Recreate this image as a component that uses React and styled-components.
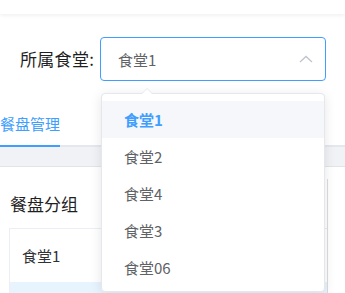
import React from "react";
import styled, { createGlobalStyle } from "styled-components";

const Global = createGlobalStyle`
  html, body { margin: 0; padding: 0; background: #fff; }
  body { font-family: "Noto Sans CJK SC", "Noto Sans", sans-serif; overflow: hidden; }
`;

const Page = styled.div`
  position: relative;
  width: 345px;
  height: 293px;
  overflow: hidden;
  background: #fff;
`;

const Header = styled.div`
  height: 14px;
  background: #fff;
  box-shadow: 0 1px 4px rgba(0, 21, 41, 0.08);
  position: relative;
  z-index: 1;
`;

const FilterRow = styled.div`
  display: flex;
  align-items: center;
  padding: 23px 0 0 20px;
`;

const Label = styled.span`
  width: 75px;
  font-size: 17px;
  color: #1f1f1f;
  margin-right: 5px;
  line-height: 44px;
  letter-spacing: 0.3px;
`;

const Select = styled.div`
  width: 226px;
  height: 44px;
  box-sizing: border-box;
  border: 1px solid #409eff;
  border-radius: 4px;
  display: flex;
  align-items: center;
  justify-content: space-between;
  padding: 0 12px 0 17px;
  color: #606266;
  font-size: 15px;
`;

const Tabs = styled.div`
  margin-top: 24px;
  display: flex;
  border-bottom: 2px solid #e4e7ed;
`;

const Tab = styled.div`
  height: 40px;
  line-height: 38px;
  font-size: 15px;
  color: ${(p) => (p.$active ? "#409eff" : "#303133")};
  position: relative;
  &::after {
    content: "";
    position: absolute;
    left: 0;
    right: 0;
    bottom: -2px;
    height: 2px;
    background: ${(p) => (p.$active ? "#409eff" : "transparent")};
  }
`;

const Band = styled.div`
  height: 19px;
  background: #f0f2f5;
  border-bottom: 1px solid #e2e4e8;
`;

const Body = styled.div`
  display: flex;
`;

const Card = styled.div`
  flex: 1;
  padding: 0 0 0 9px;
`;

const CardTitle = styled.div`
  font-size: 17px;
  color: #1f1f1f;
  height: 61px;
  line-height: 24px;
  padding-top: 25px;
  box-sizing: border-box;
  padding-left: 1px;
`;

const Table = styled.div`
  border: 1px solid #ebeef5;
  border-right: none;
  border-bottom: none;
`;

const Row = styled.div`
  height: ${(p) => (p.$h ? p.$h : 53)}px;
  display: flex;
  align-items: center;
  padding-left: 12px;
  font-size: 15px;
  color: #303133;
  background: ${(p) => (p.$current ? "#e8f4fd" : "#fff")};
`;

const SideEdge = styled.div`
  width: 1px;
  margin: 12px 17px 0 0;
  background: #dcdcdc;
`;

const Dropdown = styled.div`
  position: absolute;
  left: 101px;
  top: 93px;
  width: 224px;
  height: 199px;
  box-sizing: border-box;
  background: #fff;
  border: 1px solid #e4e7ed;
  border-radius: 4px;
  box-shadow: 0 2px 12px 0 rgba(0, 0, 0, 0.1);
  padding: 7px 0 6px;
  z-index: 5;
  &::before {
    content: "";
    position: absolute;
    left: 39px;
    top: -6px;
    border-width: 0 6px 6px;
    border-style: solid;
    border-color: transparent transparent #e4e7ed;
  }
  &::after {
    content: "";
    position: absolute;
    left: 40px;
    top: -5px;
    border-width: 0 5px 5px;
    border-style: solid;
    border-color: transparent transparent #fff;
  }
`;

const Option = styled.div`
  height: 37px;
  line-height: 37px;
  padding: 0 22px;
  font-size: 15px;
  color: ${(p) => (p.$selected ? "#409eff" : "#606266")};
  font-weight: ${(p) => (p.$selected ? 700 : 400)};
  background: ${(p) => (p.$selected ? "#f5f7fa" : "#fff")};
`;

const Arrow = () => (
  <svg width="14" height="8" viewBox="0 0 14 8">
    <path d="M1 7 L7 1.5 L13 7" fill="none" stroke="#c0c4cc" strokeWidth="1.3" />
  </svg>
);

const options = ["食堂1", "食堂2", "食堂4", "食堂3", "食堂06"];

export default function App() {
  return (
    <Page>
      <Global />
      <Header />
      <FilterRow>
        <Label>所属食堂:</Label>
        <Select>
          <span>食堂1</span>
          <Arrow />
        </Select>
      </FilterRow>
      <Tabs>
        <Tab $active>餐盘管理</Tab>
      </Tabs>
      <Band />
      <Body>
        <Card>
          <CardTitle>餐盘分组</CardTitle>
          <Table>
            <Row>食堂1</Row>
            <Row $current $h={20} />
          </Table>
        </Card>
        <SideEdge />
      </Body>
      <Dropdown>
        {options.map((o, i) => (
          <Option key={o} $selected={i === 0}>
            {o}
          </Option>
        ))}
      </Dropdown>
    </Page>
  );
}
